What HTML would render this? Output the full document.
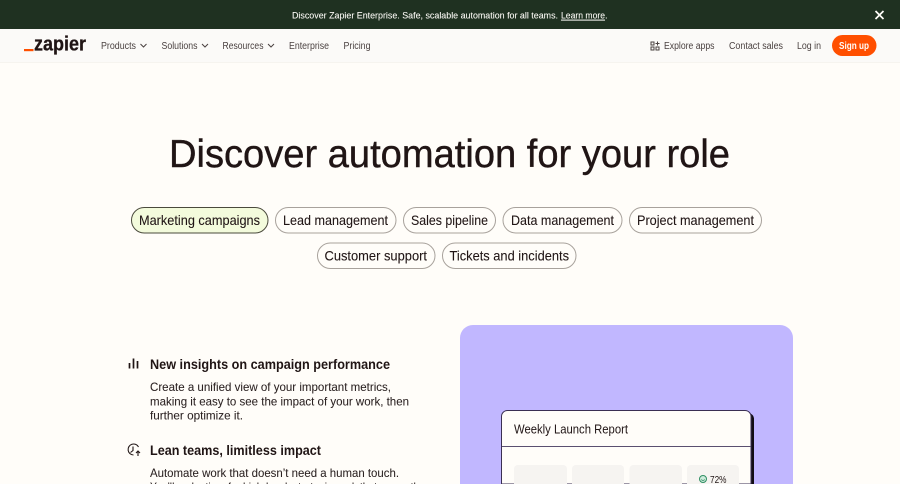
<!DOCTYPE html>
<html lang="en">
<head>
<meta charset="utf-8">
<title>Zapier</title>
<style>
html,body{margin:0;padding:0;width:900px;height:484px;overflow:hidden;background:#fffdf9}
svg{display:block}
text{font-family:"Liberation Sans",sans-serif;white-space:pre}
.nav{font-size:10px;fill:#4a4140}
.pill{font-size:14px;fill:#201515;stroke:#201515;stroke-width:.08px}
.h{font-size:14px;font-weight:700;fill:#201515}
.b{font-size:12px;fill:#2b2222;stroke:#2b2222;stroke-width:.05px}
.ban{font-size:9.6px;fill:#fffdf9;stroke:#fffdf9;stroke-width:.06px}
</style>
</head>
<body>
<svg width="900" height="484" viewBox="0 0 900 484" xmlns="http://www.w3.org/2000/svg">
<rect width="900" height="484" fill="#fffdf9"/>
<rect width="900" height="29" fill="#1f3121"/>
<text class="ban" x="292" y="18.6" textLength="266" lengthAdjust="spacingAndGlyphs">Discover Zapier Enterprise. Safe, scalable automation for all teams.</text>
<text class="ban" x="561" y="18.6" text-decoration="underline" textLength="44" lengthAdjust="spacingAndGlyphs">Learn more</text>
<text class="ban" x="605" y="18.6">.</text>
<path d="M875.5 11 L883.5 19 M883.5 11 L875.5 19" stroke="#fffdf9" stroke-width="1.7" fill="none"/>

<rect y="29" width="900" height="33" fill="#fbfaf8"/>
<rect y="62" width="900" height="1" fill="#f6f4ef"/>
<rect x="24" y="49" width="9.5" height="2.2" fill="#ff4f00"/>
<text x="34" y="50.7" font-size="20" font-weight="700" fill="#201515" stroke="#201515" stroke-width=".3" textLength="52" lengthAdjust="spacingAndGlyphs">zapier</text>
<text class="nav" x="101" y="49" textLength="35" lengthAdjust="spacingAndGlyphs">Products</text>
<path d="M140.5 44 L143.5 47 L146.5 44" stroke="#4a4140" stroke-width="1" fill="none"/>
<text class="nav" x="161.5" y="49" textLength="36" lengthAdjust="spacingAndGlyphs">Solutions</text>
<path d="M202 44 L205 47 L208 44" stroke="#4a4140" stroke-width="1" fill="none"/>
<text class="nav" x="222.5" y="49" textLength="41" lengthAdjust="spacingAndGlyphs">Resources</text>
<path d="M268 44 L271 47 L274 44" stroke="#4a4140" stroke-width="1" fill="none"/>
<text class="nav" x="289" y="49" textLength="40" lengthAdjust="spacingAndGlyphs">Enterprise</text>
<text class="nav" x="343.5" y="49" textLength="27" lengthAdjust="spacingAndGlyphs">Pricing</text>

<g fill="none" stroke="#4a4140" stroke-width="1">
<rect x="651" y="42" width="3" height="3"/>
<rect x="651" y="47" width="3" height="3"/>
<rect x="656" y="47" width="3" height="3"/>
<path d="M657.5 41.5 V45.5 M655.5 43.5 H659.5"/>
</g>
<text class="nav" x="664" y="49" textLength="50.5" lengthAdjust="spacingAndGlyphs">Explore apps</text>
<text class="nav" x="729" y="49" textLength="54" lengthAdjust="spacingAndGlyphs">Contact sales</text>
<text class="nav" x="797" y="49" textLength="24" lengthAdjust="spacingAndGlyphs">Log in</text>
<rect x="832" y="35" width="44.5" height="21" rx="10.5" fill="#ff4f00"/>
<text x="839" y="49" font-size="10" font-weight="700" fill="#fffdf9" textLength="30" lengthAdjust="spacingAndGlyphs">Sign up</text>

<text x="169" y="167" font-size="39" fill="#201515" stroke="#201515" stroke-width=".4" textLength="561" lengthAdjust="spacingAndGlyphs">Discover automation for your role</text>

<g fill="#fffdf9" stroke="#a8a29c" stroke-width="1">
<rect x="131.5" y="207.5" width="136.5" height="25.5" rx="12.7" fill="#f3fbdc" stroke="#4a4a3c"/>
<rect x="275.5" y="207.5" width="120.5" height="25.5" rx="12.7"/>
<rect x="403.5" y="207.5" width="92" height="25.5" rx="12.7"/>
<rect x="503" y="207.5" width="119" height="25.5" rx="12.7"/>
<rect x="629.5" y="207.5" width="132" height="25.5" rx="12.7"/>
<rect x="317.5" y="243" width="117.5" height="25.5" rx="12.7"/>
<rect x="442.5" y="243" width="133.5" height="25.5" rx="12.7"/>
</g>
<text class="pill" x="139" y="225" textLength="121" lengthAdjust="spacingAndGlyphs">Marketing campaigns</text>
<text class="pill" x="283" y="225" textLength="105" lengthAdjust="spacingAndGlyphs">Lead management</text>
<text class="pill" x="411" y="225" textLength="77" lengthAdjust="spacingAndGlyphs">Sales pipeline</text>
<text class="pill" x="511" y="225" textLength="103" lengthAdjust="spacingAndGlyphs">Data management</text>
<text class="pill" x="637" y="225" textLength="117" lengthAdjust="spacingAndGlyphs">Project management</text>
<text class="pill" x="324.5" y="260.5" textLength="102.5" lengthAdjust="spacingAndGlyphs">Customer support</text>
<text class="pill" x="449.5" y="260.5" textLength="119.5" lengthAdjust="spacingAndGlyphs">Tickets and incidents</text>

<path d="M129.5 363 V368.5 M133.5 358.5 V368.5 M137.5 361 V368.5" stroke="#201515" stroke-width="1.7" fill="none"/>
<text class="h" x="150" y="369" textLength="240" lengthAdjust="spacingAndGlyphs">New insights on campaign performance</text>
<text class="b" x="150" y="391" textLength="241" lengthAdjust="spacingAndGlyphs">Create a unified view of your important metrics,</text>
<text class="b" x="150" y="405.5" textLength="259" lengthAdjust="spacingAndGlyphs">making it easy to see the impact of your work, then</text>
<text class="b" x="150" y="419.5" textLength="93" lengthAdjust="spacingAndGlyphs">further optimize it.</text>

<path d="M138.5 447 A5.5 5.5 0 1 0 133.5 455 M133 446.5 V450.5 L130.5 452.5 M138 456 V451 M136 453 L138 451 L140 453" stroke="#201515" stroke-width="1.1" fill="none"/>
<text class="h" x="150" y="455" textLength="171" lengthAdjust="spacingAndGlyphs">Lean teams, limitless impact</text>
<text class="b" x="150" y="477" textLength="249" lengthAdjust="spacingAndGlyphs">Automate work that doesn’t need a human touch.</text>
<text class="b" x="150" y="491" textLength="275" lengthAdjust="spacingAndGlyphs">You’ll make time for high-level, strategic work that grows the</text>

<path d="M460 484 V338 A13 13 0 0 1 473 325 H780 A13 13 0 0 1 793 338 V484 Z" fill="#c1b7ff"/>
<path d="M504 413 H748 A6 6 0 0 1 754 419 V484 H504 Z" fill="#120d14"/>
<path d="M501.5 484 V416.5 A6 6 0 0 1 507.5 410.5 H745 A6 6 0 0 1 751 416.5 V484 Z" fill="#fffdf9" stroke="#3a2f52" stroke-width="1"/>
<rect x="502" y="446" width="249" height="1" fill="#5a5070"/>
<text x="514" y="433.5" font-size="12.5" fill="#201515" textLength="114" lengthAdjust="spacingAndGlyphs">Weekly Launch Report</text>
<g fill="#f6f4f1">
<path d="M514 484 V469 A4 4 0 0 1 518 465 H563 A4 4 0 0 1 567 469 V484 Z"/>
<path d="M572 484 V469 A4 4 0 0 1 576 465 H620 A4 4 0 0 1 624 469 V484 Z"/>
<path d="M629.5 484 V469 A4 4 0 0 1 633.5 465 H678 A4 4 0 0 1 682 469 V484 Z"/>
<path d="M687 484 V469 A4 4 0 0 1 691 465 H735 A4 4 0 0 1 739 469 V484 Z"/>
</g>
<circle cx="703" cy="479" r="3.5" fill="#cdeadb" stroke="#2f8f63" stroke-width="1"/>
<path d="M701.3 479.5 Q703 481.5 704.7 479.5" stroke="#2f8f63" stroke-width=".8" fill="none"/>
<text x="710" y="483" font-size="10.5" fill="#201515" textLength="16.5" lengthAdjust="spacingAndGlyphs">72%</text>
</svg>
</body>
</html>
